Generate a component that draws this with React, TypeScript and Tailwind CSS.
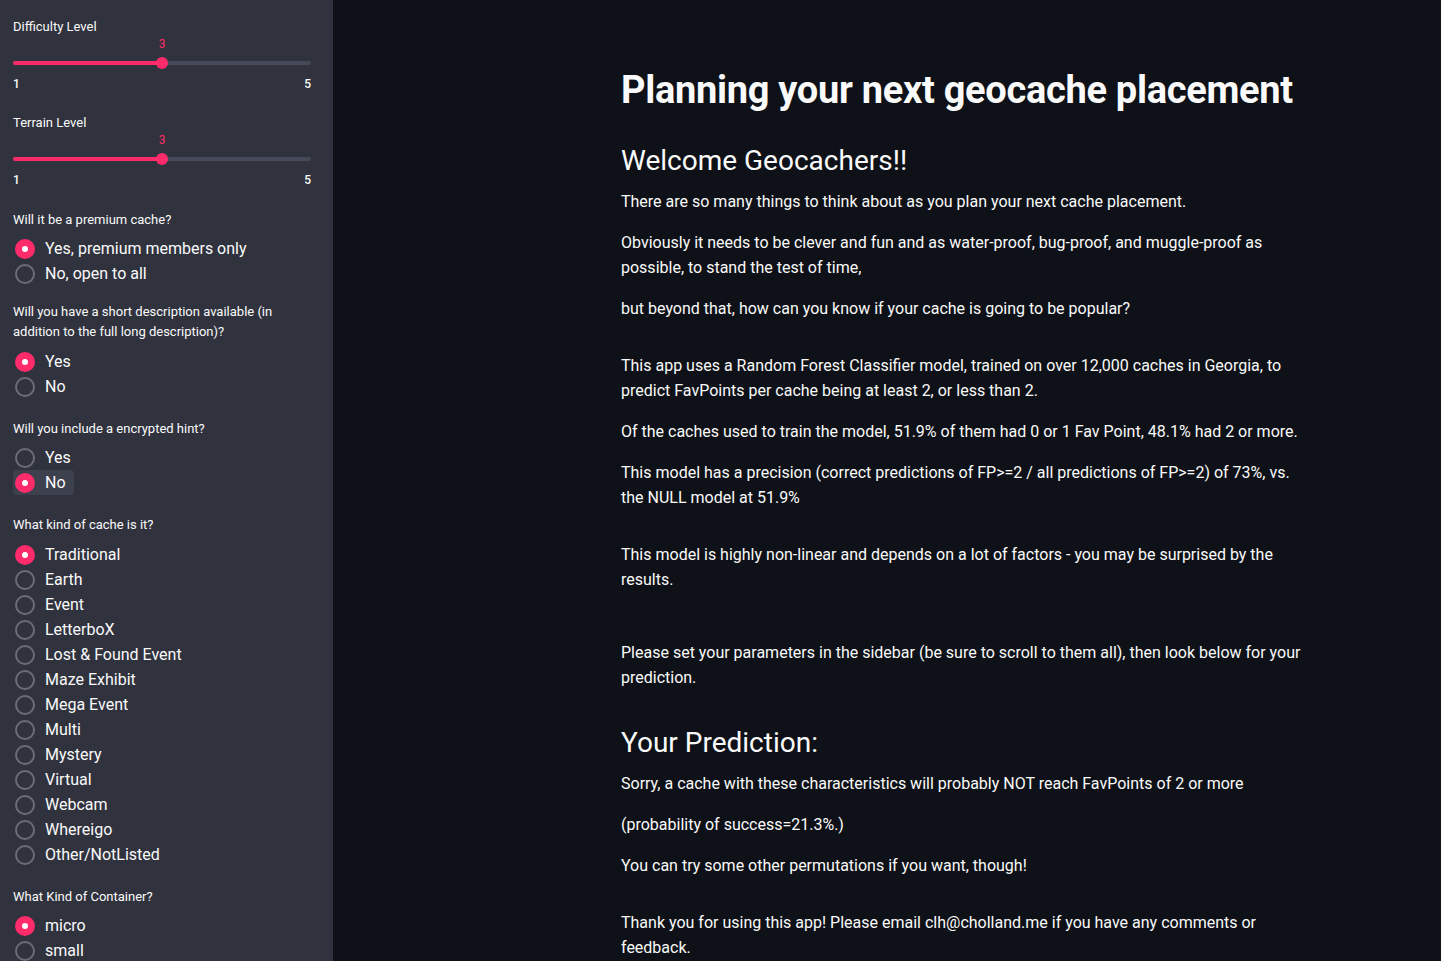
import React from 'react'

const PINK = 'bg-[#ff2b6a]'

const Radio = ({ label, checked, active }: { label: string; checked?: boolean; active?: boolean }) => {
  return (
    <div className={'flex items-center h-[25px] w-fit pl-[2px] pr-[8px] rounded ' + (active ? 'bg-[#3d404d]' : '')}>
      {checked ? (
        <span className={'w-[20px] h-[20px] rounded-full flex items-center justify-center ' + PINK}>
          <span className='w-[6px] h-[6px] rounded-full bg-white' />
        </span>
      ) : (
        <span className='w-[20px] h-[20px] rounded-full border-2 border-[#6b6d76]' />
      )}
      <span className='ml-[10px] text-[16px] text-[#fafafa] leading-[25px]'>{label}</span>
    </div>
  )
}

const Slider = ({ label }: { label: string }) => {
  return (
    <div className='h-[96px]'>
      <div className='text-[13px] leading-[20px] text-[#fafafa] pt-[17px]'>{label}</div>
      <div className='relative h-[59px] mr-[9px]'>
        <div className='absolute left-[149px] -translate-x-1/2 top-0 text-[12px] leading-[14px] text-[#ff2b6a]'>3</div>
        <div className='absolute left-0 right-0 top-[24px] h-[4px] rounded-full bg-[#464957]' />
        <div className={'absolute left-0 w-[149px] top-[24px] h-[4px] rounded-full ' + PINK} />
        <div className={'absolute left-[143px] top-[20px] w-[12px] h-[12px] rounded-full ' + PINK} />
        <div className='absolute left-0 top-[40px] text-[12px] leading-[14px] text-[#fafafa] font-medium'>1</div>
        <div className='absolute right-0 top-[40px] text-[12px] leading-[14px] text-[#fafafa] font-medium'>5</div>
      </div>
    </div>
  )
}

const Group = ({ label, children, extra, gap }: { label: React.ReactNode; children: React.ReactNode; extra?: string; gap?: string }) => {
  return (
    <div className={extra || 'mb-[20px]'}>
      <div className={'text-[13px] leading-[20px] text-[#fafafa] ' + (gap || 'mb-[6px]')}>{label}</div>
      <div>{children}</div>
    </div>
  )
}

const cacheTypes = ['Traditional', 'Earth', 'Event', 'LetterboX', 'Lost & Found Event', 'Maze Exhibit', 'Mega Event', 'Multi', 'Mystery', 'Virtual', 'Webcam', 'Whereigo', 'Other/NotListed']

const P = ({ children, extra }: { children: React.ReactNode; extra?: string }) => (
  <p className={'text-[16px] leading-[25px] text-[#fafafa] ' + (extra || 'mb-[16px]')}>{children}</p>
)

export default function App() {
  return (
    <main className='flex w-full h-[961px] overflow-hidden bg-[#0e1117]' style={{ fontFamily: 'Roboto, "Liberation Sans", sans-serif' }}>
      <aside className='w-[333px] shrink-0 h-full bg-[#30323e] px-[13px] overflow-hidden'>
        <Slider label='Difficulty Level' />
        <Slider label='Terrain Level' />
        <div className='h-[18px]' />
        <Group label='Will it be a premium cache?' extra='mb-[16px]'>
          <Radio label='Yes, premium members only' checked />
          <Radio label='No, open to all' />
        </Group>
        <Group label={<>Will you have a short description available (in<br />addition to the full long description)?</>} gap='mb-[7px]'>
          <Radio label='Yes' checked />
          <Radio label='No' />
        </Group>
        <Group label='Will you include a encrypted hint?'>
          <Radio label='Yes' />
          <Radio label='No' checked active />
        </Group>
        <Group label='What kind of cache is it?' gap='mb-[7px]'>
          {cacheTypes.map((t, i) => (
            <Radio key={t} label={t} checked={i === 0} />
          ))}
        </Group>
        <Group label='What Kind of Container?'>
          <Radio label='micro' checked />
          <Radio label='small' />
        </Group>
      </aside>

      <section className='flex-1 pl-[288px] pt-[66px]'>
        <div className='w-[690px]'>
          <h1 className='text-[38px] leading-[48px] font-bold text-[#fafafa] tracking-[-0.3px] mb-[29px] whitespace-nowrap'>Planning your next geocache placement</h1>
          <h2 className='text-[28px] leading-[36px] text-[#fafafa] mb-[10px]'>Welcome Geocachers!!</h2>
          <P>There are so many things to think about as you plan your next cache placement.</P>
          <P>Obviously it needs to be clever and fun and as water-proof, bug-proof, and muggle-proof as possible, to stand the test of time,</P>
          <P extra='mb-[32px]'>but beyond that, how can you know if your cache is going to be popular?</P>
          <P>This app uses a Random Forest Classifier model, trained on over 12,000 caches in Georgia, to predict FavPoints per cache being at least 2, or less than 2.</P>
          <P>Of the caches used to train the model, 51.9% of them had 0 or 1 Fav Point, 48.1% had 2 or more.</P>
          <P extra='mb-[32px]'>This model has a precision (correct predictions of FP&gt;=2 / all predictions of FP&gt;=2) of 73%, vs. the NULL model at 51.9%</P>
          <P extra='mb-[48px]'>This model is highly non-linear and depends on a lot of factors - you may be surprised by the results.</P>
          <P extra='mb-[35px]'>Please set your parameters in the sidebar (be sure to scroll to them all), then look below for your prediction.</P>
          <h2 className='text-[28px] leading-[36px] text-[#fafafa] mb-[10px]'>Your Prediction:</h2>
          <P>Sorry, a cache with these characteristics will probably NOT reach FavPoints of 2 or more</P>
          <P>(probability of success=21.3%.)</P>
          <P extra='mb-[32px]'>You can try some other permutations if you want, though!</P>
          <P>Thank you for using this app! Please email clh@cholland.me if you have any comments or feedback.</P>
        </div>
      </section>
    </main>
  )
}
